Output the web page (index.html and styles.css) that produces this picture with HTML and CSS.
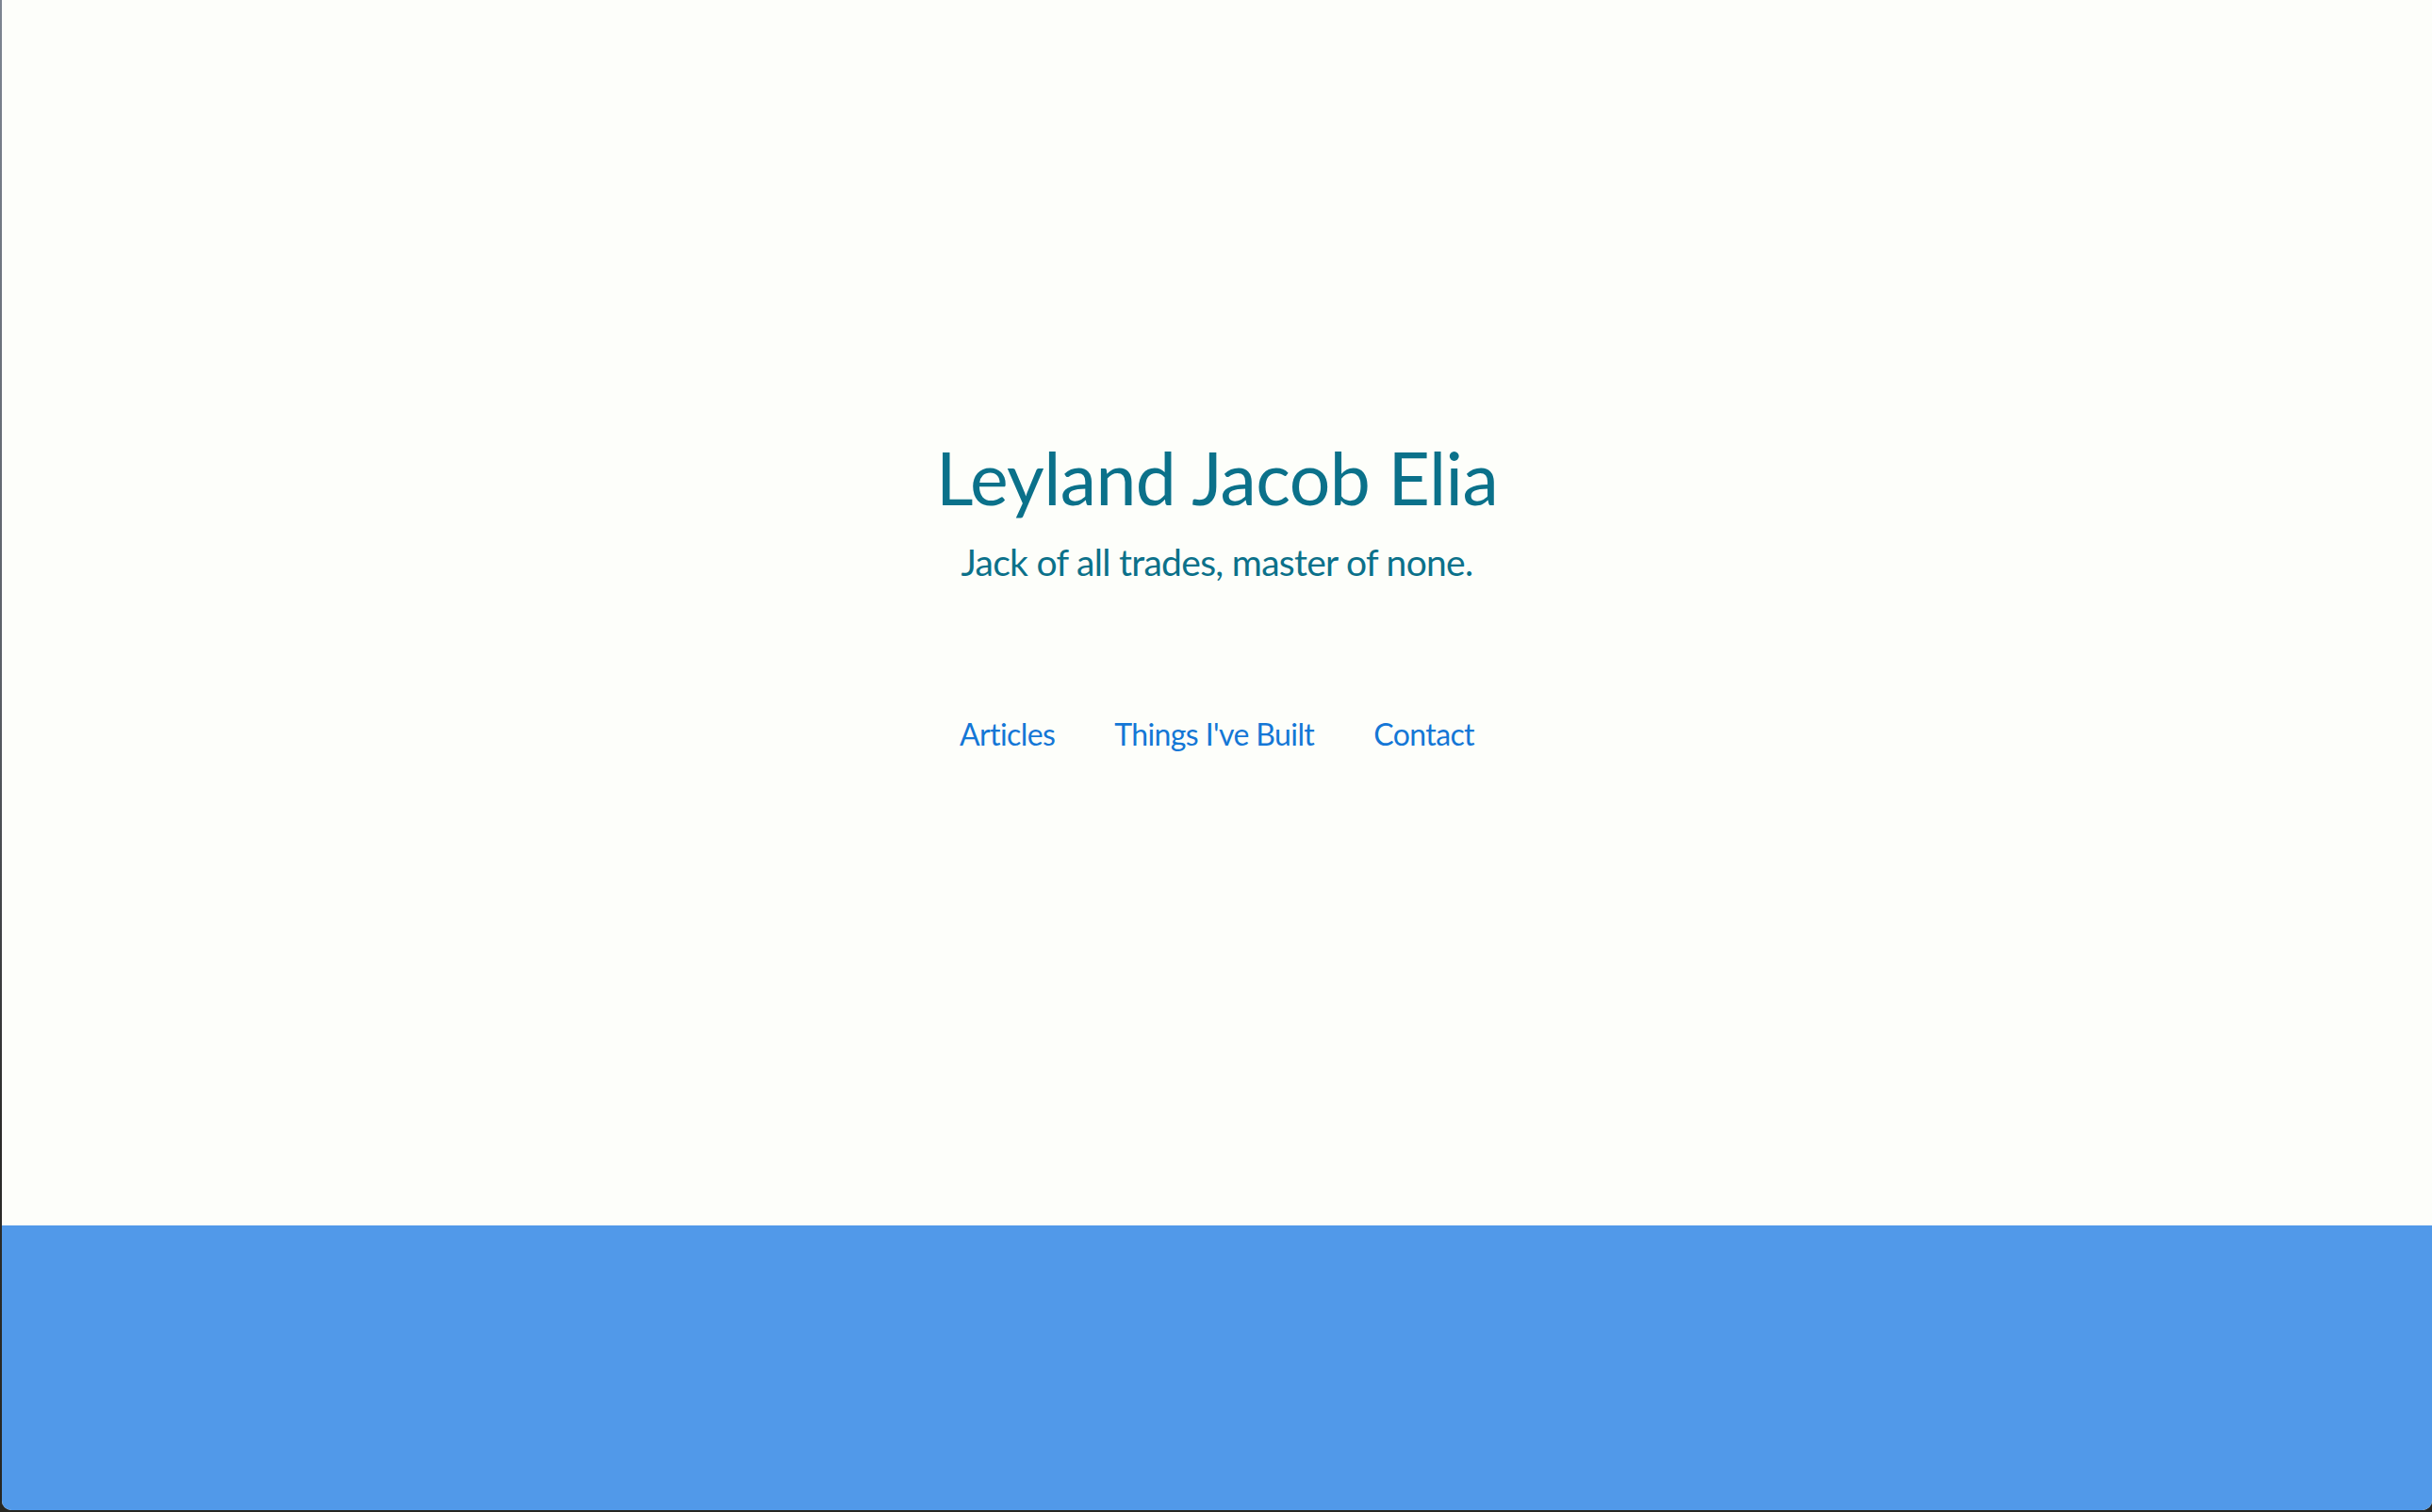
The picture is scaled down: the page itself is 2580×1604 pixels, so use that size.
FILE: index.html
```html
<!DOCTYPE html>
<html lang="en">
<head>
<meta charset="utf-8">
<title>Leyland Jacob Elia</title>
<link rel="stylesheet" href="styles.css">
</head>
<body>
<div class="window">
  <main class="hero">
    <h1 class="name">Leyland Jacob Elia</h1>
    <p class="tagline">Jack of all trades, master of none.</p>
    <nav class="nav">
      <a class="nav-link" href="#articles">Articles</a>
      <a class="nav-link" href="#built">Things I've Built</a>
      <a class="nav-link" href="#contact">Contact</a>
    </nav>
  </main>
  <footer class="footer"></footer>
</div>
</body>
</html>
```
FILE: styles.css
```css
html {
  margin: 0;
  height: 100%;
  background: linear-gradient(to bottom, #7d8591 0%, #5a5f66 45%, #2c2c2a 75%, #262622 100%);
}
body {
  margin: 0;
  height: 1604px;
  overflow: hidden;
}
.window {
  margin-left: 2px;
  height: 1602px;
  display: flex;
  flex-direction: column;
  background: #fdfefa;
  border-bottom-left-radius: 10px;
  border-bottom-right-radius: 10px;
  overflow: hidden;
}
.hero {
  height: 1300px;
  flex: none;
  box-sizing: border-box;
  padding-top: 460px;
  display: flex;
  flex-direction: column;
  align-items: center;
  font-family: Lato, "Open Sans", sans-serif;
}
.name {
  margin: 0;
  font-size: 77px;
  font-weight: 400;
  line-height: 1.2;
  letter-spacing: -0.6px;
  color: #0b718a;
}
.tagline {
  margin: 21px 0 0;
  font-size: 39px;
  line-height: 1.2;
  letter-spacing: -0.7px;
  color: #0b718a;
}
.nav {
  margin-top: 140px;
  display: flex;
  gap: 63px;
}
.nav-link {
  font-size: 32px;
  line-height: 1.2;
  letter-spacing: -0.6px;
  color: #1477d6;
  text-decoration: none;
}
.footer {
  flex: 1;
  background: #5199e9;
}
```
